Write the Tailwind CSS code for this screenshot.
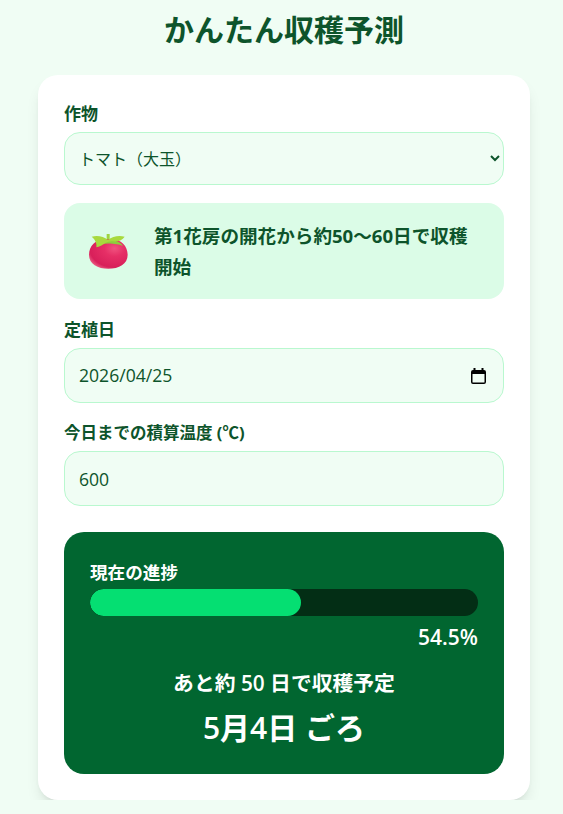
<!DOCTYPE html>
<html lang="ja">
<head>
    <meta charset="UTF-8">
    <title>かんたん収穫予測</title>
    <script src="https://cdn.jsdelivr.net/npm/@tailwindcss/browser@4"></script>
</head>
<body class="bg-green-50 text-green-900 font-['Open_Sans','Noto_Sans_CJK_JP',sans-serif] overflow-hidden">

<div class="w-[492px] ml-[38px] pt-[8px]">
    <h1 class="text-[30px] leading-[44px] font-bold text-center mb-[23px]">かんたん収穫予測</h1>

    <!-- Main card -->
    <div class="bg-white rounded-[20px] shadow-lg px-[26px] pt-[26px] pb-[26px]">

        <!-- Crop -->
        <label class="block text-[17px] leading-[26px] font-bold mb-[5px]">作物</label>
        <select class="block w-full h-[53px] pl-[10px] pr-[2px] rounded-[16px] border border-green-200 bg-green-50 text-[16px]">
            <option>トマト（大玉）</option>
        </select>

        <!-- Crop info -->
        <div class="flex items-center gap-[26px] h-[96px] mt-[18px] mb-[18px] pl-[25px] pr-[24px] rounded-[16px] bg-green-100">
            <svg class="w-[39px] h-[35px] shrink-0" viewBox="0 0 117 105">
                <defs>
                    <radialGradient id="tomato" cx="0.66" cy="0.32" r="0.75">
                        <stop offset="0" stop-color="#f0527f"/>
                        <stop offset="0.35" stop-color="#e62f66"/>
                        <stop offset="0.85" stop-color="#d81f5a"/>
                        <stop offset="1" stop-color="#e8557f"/>
                    </radialGradient>
                </defs>
                <path d="M58 15C95 12 116 35 116 62C116 90 90 104 58 104C26 104 0 90 0 62C0 35 21 12 58 15Z" fill="url(#tomato)"/>
                <path d="M37 30C44 16 90 14 102 36C90 30 60 26 37 30Z" fill="#8ccf3c"/>
                <path d="M53 0H62V16H53Z" fill="#9ed43f"/>
                <path d="M8 8C25 3 44 7 57 18C70 7 90 3 107 8C100 18 88 24 72 22C62 21 57 24 50 26C42 33 30 38 22 40C24 30 20 18 8 8Z" fill="#a8d93e"/>
            </svg>
            <p class="text-[18.600px] leading-[31px] font-bold">第1花房の開花から約50〜60日で収穫開始</p>
        </div>

        <!-- Planting date -->
        <label class="block text-[17px] leading-[26px] font-bold mb-[5px]">定植日</label>
        <div class="flex items-center justify-between h-[55px] pl-[14px] pr-[17px] rounded-[16px] border border-green-200 bg-green-50">
            <input type="text" value="2026/04/25" class="w-[200px] text-[17.600px] outline-none">
            <svg class="w-[15px] h-[16px]" viewBox="0 0 15 16"><path d="M2.500 0v2H2a2 2 0 0 0-2 2v10a2 2 0 0 0 2 2h11a2 2 0 0 0 2-2V4a2 2 0 0 0-2-2h-.500V0h-2v2h-6V0zM1.500 6h12v8a.500.500 0 0 1-.500.500H2a.500.500 0 0 1-.500-.500z" fill="#000"/></svg>
        </div>

        <!-- Accumulated temperature -->
        <label class="block text-[16.500px] leading-[24px] font-bold mt-[18px] mb-[6px]">今日までの積算温度 (℃)</label>
        <input type="number" value="600" class="block w-full h-[55px] px-[14px] rounded-[16px] border border-green-200 bg-green-50 text-[17.600px]">

        <!-- Result -->
        <div class="mt-[26px] h-[242px] px-[26px] pt-[28px] rounded-[20px] bg-green-800 text-white">
            <div class="text-[17.600px] leading-[24px] font-bold mb-[5px]">現在の進捗</div>
            <div class="h-[27px] rounded-full bg-green-950 overflow-hidden">
                <div class="h-full rounded-full bg-green-400" style="width: 54.5%"></div>
            </div>
            <div class="text-right text-[21px] leading-[28px] font-semibold mt-[7px] mb-[17px]">54.5%</div>
            <div class="text-center text-[20.800px] leading-[30px] font-semibold">あと約 50 日で収穫予定</div>
            <div class="text-center text-[30px] leading-[44px] font-semibold mt-[8px]">5月4日 ごろ</div>
        </div>
    </div>
</div>

</body>
</html>
